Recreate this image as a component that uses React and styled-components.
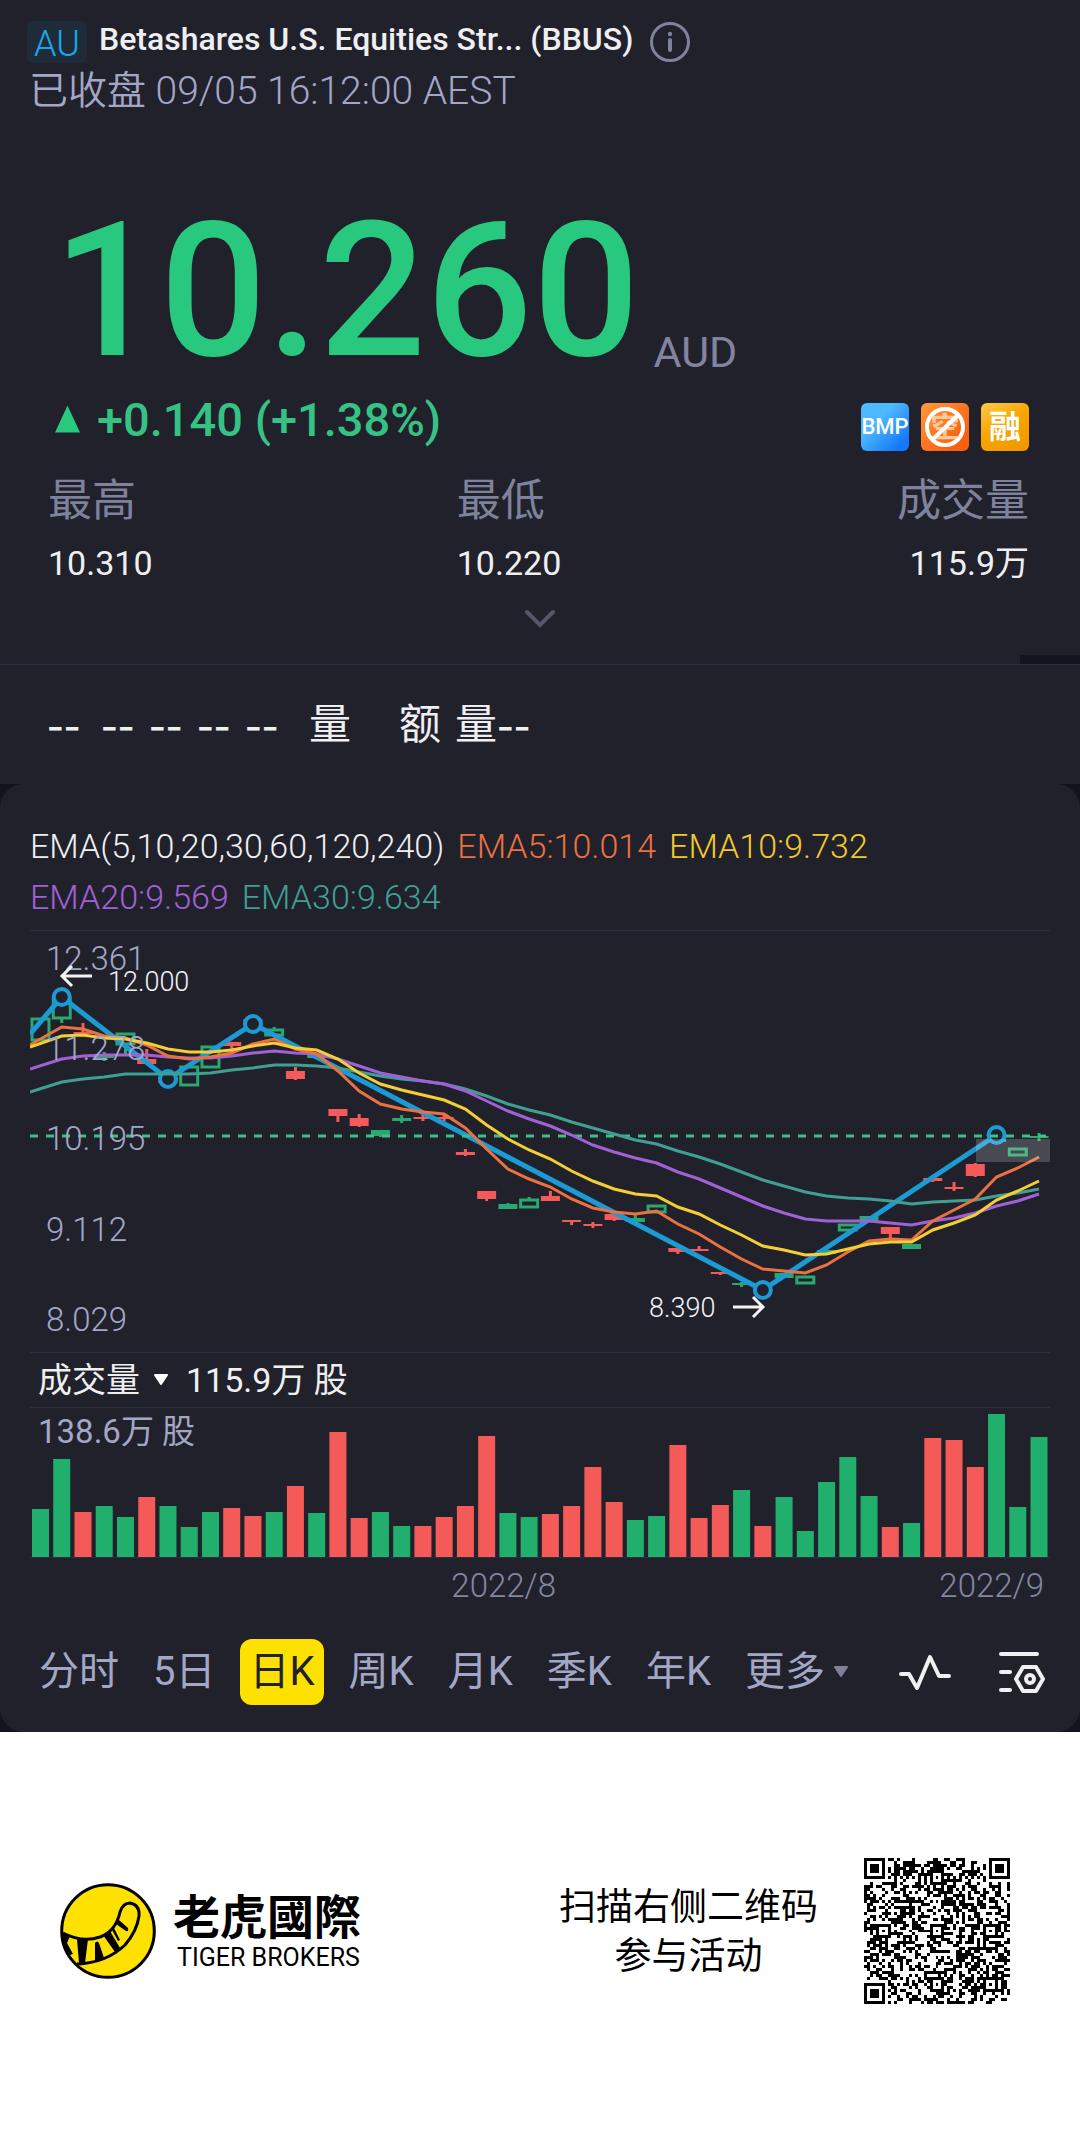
import { useState } from "react";
import styled, { createGlobalStyle, css } from "styled-components";

const GlobalStyle = createGlobalStyle`
  *,
  *::before,
  *::after {
    box-sizing: border-box;
  }

  body {
    margin: 0;
    background-color: #fff;
    font-family: Roboto, "Noto Sans CJK SC", sans-serif;
    color: #efeff2;
  }

  button {
    font: inherit;
    color: inherit;
    background: none;
    border: none;
    padding: 0;
    cursor: pointer;
  }
`;

const GREEN = "#21af6e";
const RED = "#f45a57";

/* ---------- Quote header ---------- */

const Screen = styled.main`
  background-color: #21212b;
`;

const Header = styled.header`
  padding: 21px 27px 0;
`;

const TitleRow = styled.div`
  display: flex;
  align-items: flex-start;
`;

const Market = styled.span`
  width: 60px;
  height: 42px;
  border-radius: 6px;
  background-color: #1e2c39;
  color: #1ba8ea;
  font-size: 36px;
  font-weight: 350;
  line-height: 46px;
  text-align: center;
`;

const Title = styled.h1`
  margin: 0 16px 0 12px;
  font-size: 32px;
  font-weight: 500;
  line-height: 36px;
`;

const InfoButton = styled.button`
  display: flex;
`;

const Status = styled.p`
  margin: 3px 0 0 2px;
  font-size: 39px;
  font-weight: 350;
  line-height: 50px;
  color: #a3a7c6;
`;

const Quote = styled.section`
  padding: 92px 51px 0 48px;
`;

const PriceRow = styled.div`
  display: flex;
  align-items: flex-end;
  gap: 14px;
  padding-left: 5px;
`;

const Price = styled.strong`
  font-size: 188px;
  font-weight: 500;
  line-height: 166px;
  color: #28c87e;
`;

const Currency = styled.span`
  font-size: 43px;
  line-height: 44px;
  color: #8185a0;
`;

const ChangeRow = styled.div`
  display: flex;
  justify-content: space-between;
  margin-top: 29px;
  padding-left: 7px;
`;

const Change = styled.span`
  display: flex;
  align-items: center;
  gap: 17px;
  height: 32px;
  font-size: 47px;
  font-weight: 500;
  color: #35c284;
`;

const Badges = styled.div`
  display: flex;
  gap: 12px;
`;

const Badge = styled.span`
  display: grid;
  place-items: center;
  width: 48px;
  height: 48px;
  border-radius: 6px;
  overflow: hidden;
  font-size: ${(props) => props.$size || "32px"};
  font-weight: ${(props) => props.$weight || 700};
  line-height: 48px;
  color: #fff;
  background: ${(props) => props.$fill};
`;

const Stats = styled.dl`
  display: grid;
  grid-template-columns: 5fr 4fr 3fr;
  margin: 22px 0 0;
`;

const Stat = styled.div`
  text-align: ${(props) => (props.$end ? "right" : "left")};

  dt {
    font-size: 44px;
    line-height: 56px;
    color: #7e829c;
  }

  dd {
    margin: 14px 0 0;
    font-size: 34px;
    line-height: 40px;
  }
`;

const ExpandButton = styled.button`
  display: flex;
  align-items: flex-start;
  margin: 26px auto 0;
  height: 46px;
`;

const Shade = styled.div`
  width: 60px;
  height: 9px;
  margin-left: auto;
  background-color: #14141e;
`;

const DepthRow = styled.div`
  display: flex;
  align-items: center;
  height: 120px;
  padding: 0 47px 8px;
  border-top: 1px solid #2d2f3b;
  font-family: "Noto Sans CJK SC", sans-serif;
  font-size: 42px;
  line-height: 60px;
`;

const Dashes = styled.span`
  width: ${(props) => (props.$wide ? "54px" : "48px")};
  font-size: 48px;
`;

const DepthLabel = styled.span`
  display: flex;
  margin-left: ${(props) => props.$gap};
`;

/* ---------- Chart panel ---------- */

const PanelWrap = styled.div`
  background-color: #14141e;
`;

const Panel = styled.section`
  padding: 37px 30px 27px;
  border-radius: 24px;
  background-color: #21212b;
`;

const Legend = styled.div`
  display: flex;
  flex-wrap: wrap;
  column-gap: 13px;
  margin-bottom: 7px;
  font-size: 34px;
  font-weight: 350;
  line-height: 51px;
`;

const LegendItem = styled.span`
  color: ${(props) => props.$color};
`;

const Plot = styled.svg`
  display: block;
  width: 100%;
  height: auto;
  border-top: 1px solid #2d2f3b;
`;

const VolumeHead = styled.div`
  display: flex;
  align-items: center;
  height: 55px;
  padding-left: 8px;
  border-top: 1px solid #2d2f3b;
  font-size: 34px;
  line-height: 54px;
`;

const VolumeButton = styled.button`
  display: flex;
  align-items: center;
  gap: 13px;
  margin-right: 17px;
`;

const Dates = styled.div`
  display: grid;
  grid-template-columns: 526px 1fr;
  padding: 3px 6px 0 0;
  border-top: 1px solid #2d2f3b;
  text-align: right;
  font-size: 33px;
  font-weight: 350;
  line-height: 50px;
  color: #8286a1;
`;

const Toolbar = styled.div`
  display: flex;
  align-items: center;
  justify-content: space-between;
  margin-top: 28px;
  padding-right: 4px;
`;

const Tabs = styled.nav`
  display: flex;
  gap: 16px;
`;

const Tab = styled.button`
  display: flex;
  align-items: center;
  gap: 8px;
  height: 66px;
  padding: 0 9px;
  border-radius: 12px;
  font-size: 40px;
  line-height: 68px;
  white-space: nowrap;
  color: #a3a7c6;

  ${(props) =>
    props.$active &&
    css`
      background-color: #ffe100;
      color: #21212b;
    `}
`;

const Tools = styled.div`
  display: flex;
  align-items: center;
  gap: 47px;
  padding-top: 2px;

  button {
    display: flex;
  }
`;

/* ---------- Share footer ---------- */

const Footer = styled.footer`
  display: flex;
  align-items: center;
  justify-content: space-between;
  height: 397px;
  padding: 0 70px 0 60px;
  color: #000;
`;

const Brand = styled.div`
  display: flex;
  align-items: center;
  gap: 17px;
`;

const BrandName = styled.div`
  display: flex;
  flex-direction: column;
  font-family: "Noto Sans CJK TC", sans-serif;
  font-size: 47px;
  font-weight: 700;
  line-height: 54px;

  small {
    padding-left: 4px;
    font-family: Roboto, sans-serif;
    font-size: 25px;
    font-weight: 400;
    line-height: 34px;
  }
`;

const Invite = styled.div`
  display: flex;
  align-items: center;
  gap: 46px;

  p {
    margin: 0;
    padding-top: 3px;
    font-size: 37px;
    line-height: 49px;
    text-align: center;
  }
`;

/* ---------- Data ---------- */

const STEP = 21.245;
const cx = (i) => 10.5 + STEP * i;

// [tipo, topo do corpo, base do corpo, topo do pavio, base do pavio]
// h = verde vazado, g = verde cheio, r = vermelho
const CANDLES = [
  ["h", 87, 108, 87, 108],
  ["h", 67, 86, 67, 92],
  ["r", 101, 103, 92, 105],
  ["g", 124, 127, 121, 130],
  ["h", 102, 112, 102, 125],
  ["r", 128, 133, 118, 133],
  ["g", 146, 152, 146, 152],
  ["h", 135, 153, 135, 153],
  ["h", 115, 135, 115, 135],
  ["r", 111, 115, 111, 123],
  ["r", 88, 92, 88, 92],
  ["h", 98, 103, 96, 103],
  ["r", 140, 148, 136, 149],
  ["g", 124, 127, 124, 127],
  ["r", 178, 185, 178, 191],
  ["r", 187, 195, 183, 196],
  ["g", 199, 205, 199, 206],
  ["g", 187, 190, 184, 192],
  ["r", 186, 188, 184, 190],
  ["r", 186, 188, 184, 190],
  ["r", 221, 224, 218, 225],
  ["r", 260, 268, 260, 270],
  ["g", 273, 278, 272, 278],
  ["h", 268, 275, 266, 275],
  ["r", 265, 270, 260, 270],
  ["r", 289, 291, 289, 294],
  ["r", 293, 295, 291, 297],
  ["r", 283, 289, 283, 290],
  ["g", 287, 291, 284, 291],
  ["h", 274, 280, 274, 280],
  ["r", 317, 321, 317, 323],
  ["r", 318, 320, 315, 320],
  ["r", 341, 343, 341, 344],
  ["g", 352, 354, 351, 356],
  null,
  ["g", 342, 347, 342, 347],
  ["h", 345, 351, 345, 351],
  ["g", 319, 323, 319, 323],
  ["h", 293, 298, 293, 298],
  ["g", 285, 290, 285, 290],
  ["r", 296, 303, 296, 308],
  ["g", 313, 318, 313, 318],
  ["r", 247, 250, 244, 251],
  ["r", 256, 258, 251, 260],
  ["r", 233, 245, 232, 246],
  ["g", 207, 211, 207, 211],
  ["h", 217, 223, 217, 223],
  ["g", 205, 207, 202, 210],
];

const EMAS = [
  {
    name: "EMA30",
    color: "#3f9f93",
    values: [
      157, 151, 148, 146, 143, 143, 143, 143, 142, 139, 137, 134, 134, 135, 137,
      141, 145, 148, 150, 153, 158, 165, 173, 179, 184, 191, 197, 203, 209, 213,
      220, 226, 233, 241, 249, 255, 261, 265, 267, 268, 270, 273, 271, 270, 269,
      265, 262, 258,
    ],
  },
  {
    name: "EMA20",
    color: "#a161d6",
    values: [
      134, 128, 125, 124, 124, 124, 126, 127, 127, 125, 122, 120, 122, 123, 128,
      135, 142, 146, 150, 153, 160, 170, 180, 188, 195, 204, 214, 221, 227, 232,
      241, 248, 257, 266, 275, 282, 288, 290, 290, 290, 292, 294, 290, 287, 282,
      275, 270, 263,
    ],
  },
  {
    name: "EMA5",
    color: "#ea7141",
    values: [
      110, 96, 98, 105, 107, 114, 125, 128, 126, 122, 113, 108, 118, 123, 140,
      160, 173, 178, 181, 183, 197, 218, 238, 248, 256, 268, 277, 281, 283, 280,
      293, 303, 316, 328, 338, 340, 342, 334, 321, 310, 308, 309, 290, 279, 268,
      246, 237, 226,
    ],
  },
  {
    name: "EMA10",
    color: "#f3cf33",
    values: [
      112, 105, 104, 107, 108, 112, 118, 121, 121, 119, 115, 112, 117, 119, 128,
      142, 153, 159, 164, 169, 178, 194, 208, 219, 228, 240, 250, 258, 263, 265,
      276, 283, 294, 304, 315, 319, 324, 323, 318, 313, 311, 311, 299, 292, 284,
      269, 260, 250,
    ],
  },
];

const SWINGS = [
  [0, 103],
  [cx(1), 66],
  [cx(6), 148],
  [cx(10), 93],
  [cx(34), 359],
  [cx(45), 204],
];

const AXIS = [
  ["12.361", 39],
  ["11.278", 129],
  ["10.195", 219],
  ["9.112", 310],
  ["8.029", 400],
];

const VOLUMES = [
  48, 98, -45, 51, 40, -60, 51, 30, 45, -49, -41, 45, -71, 44, -125, -39, 45,
  31, -31, -40, -51, -121, 44, 40, -43, -51, -90, -55, 37, 41, -112, -39, -52,
  67, -31, 60, 26, 75, 100, 61, -30, 34, -119, -117, -90, 143, 50, 120,
];

const PERIODS = ["分时", "5日", "日K", "周K", "月K", "季K", "年K"];

/* ---------- Charts ---------- */

function Candle({ index, data }) {
  const [type, top, bottom, high, low] = data;
  const color = type === "r" ? RED : "#2aa86f";
  const x = cx(index);

  return (
    <g stroke={color} strokeWidth="3">
      {high < top && <path d={`M${x} ${high}V${top}`} />}
      {low > bottom && <path d={`M${x} ${bottom}V${low}`} />}
      {type === "h" ? (
        <rect
          x={x - 8.5}
          y={top + 1}
          width="17"
          height={bottom - top}
          fill="none"
        />
      ) : (
        <rect
          x={x - 9.5}
          y={top}
          width="19"
          height={bottom - top}
          fill={color}
          stroke="none"
        />
      )}
    </g>
  );
}

function PriceChart() {
  return (
    <Plot viewBox="0 0 1020 421" role="img" aria-label="日K">
      {CANDLES.map(
        (data, i) => data && <Candle key={i} index={i} data={data} />
      )}

      <g fill="none" stroke="#1b9ad4" strokeWidth="5">
        <polyline points={SWINGS.map((p) => p.join(",")).join(" ")} />
        {SWINGS.slice(1).map(([x, y]) => (
          <circle key={x} cx={x} cy={y} r="8" fill="#21212b" strokeWidth="4" />
        ))}
      </g>

      <path
        d="M0 205H1018"
        stroke="#3fbf89"
        strokeWidth="3"
        strokeDasharray="8 8"
      />

      {EMAS.map(({ name, color, values }) => (
        <polyline
          key={name}
          points={values
            .map((y, i) => `${i === 0 ? 0 : cx(i)},${i === 0 ? y + 4 : y}`)
            .join(" ")}
          fill="none"
          stroke={color}
          strokeWidth="3"
        />
      ))}

      <rect x="946" y="208" width="74" height="23" fill="#fff" opacity="0.18" />

      <g fill="#a3a7c6" fontSize="33" fontWeight="350">
        {AXIS.map(([label, y]) => (
          <text key={label} x="16" y={y}>
            {label}
          </text>
        ))}
      </g>

      <g fill="#f3f3f5" fontSize="27" fontWeight="350">
        <text x="78" y="60">
          12.000
        </text>
        <text x="619" y="386">
          8.390
        </text>
      </g>
      <g fill="none" stroke="#f3f3f5" strokeWidth="3">
        <path d="M62 45H33M42 35L32 45L42 55" />
        <path d="M703 376H732M723 366L733 376L723 386" />
      </g>
    </Plot>
  );
}

function VolumeChart() {
  return (
    <Plot viewBox="0 0 1020 149" role="img" aria-label="成交量">
      <text x="8" y="35" fill="#a3a7c6" fontSize="33">
        138.6万 股
      </text>
      {VOLUMES.map((v, i) => (
        <rect
          key={i}
          x={cx(i) - 8.5}
          y={149 - Math.abs(v)}
          width="17"
          height={Math.abs(v)}
          fill={v < 0 ? RED : GREEN}
        />
      ))}
    </Plot>
  );
}

/* ---------- Drawings ---------- */

function Caret({ color }) {
  return (
    <svg width="16" height="12" viewBox="0 0 16 12" aria-hidden="true">
      <path
        d="M2 1H14L8 10Z"
        fill={color}
        stroke={color}
        strokeWidth="2"
        strokeLinejoin="round"
      />
    </svg>
  );
}

function TigerLogo() {
  return (
    <svg width="96" height="96" viewBox="0 0 96 96" aria-hidden="true">
      <circle cx="48" cy="48" r="46.5" fill="#ffe100" />
      <path d="M1 49L10 53L7 60L13 71L10 72Q2 62 1 49Z" />
      <path d="M17 56L28 56L25 80L19 80Z" />
      <path d="M35 60Q37 57 39 60L44 75L35 78Z" />
      <path d="M43 52L50 48L60 65L55 69Z" />
      <path d="M52 47L54 45L60 57L58 58Z" />
      <path d="M56 41L59 37L68 45Q69 49 66 48Z" />
      <path
        d="M3 50Q22 60 40 54Q56 48 60 29Q63 20 70 20Q80 22 79 33Q77 48 65 62Q46 80 17 81"
        fill="none"
        stroke="#000"
        strokeWidth="3"
      />
      <circle
        cx="48"
        cy="48"
        r="46.3"
        fill="none"
        stroke="#000"
        strokeWidth="3"
      />
    </svg>
  );
}

const QR_SIZE = 49;

// Anel concêntrico usado nos marcadores de canto e de alinhamento
function ring(row, col, r, c, radius) {
  const d = Math.max(Math.abs(row - r), Math.abs(col - c));
  if (d > radius) return null;
  return radius === 4 ? d !== 4 && d !== 2 : d !== 1;
}

function buildQr() {
  const finders = [
    [3, 3],
    [3, 45],
    [45, 3],
  ];
  const aligns = [
    [6, 24],
    [24, 6],
    [24, 24],
    [24, 42],
    [42, 24],
    [42, 42],
  ];
  let seed = 20220905;
  let path = "";

  for (let row = 0; row < QR_SIZE; row++) {
    for (let col = 0; col < QR_SIZE; col++) {
      seed = (seed * 1103515245 + 12345) % 2147483648;
      let dark = (seed >> 12) % 100 < 50;
      if (row === 6) dark = col % 2 === 0;
      if (col === 6) dark = row % 2 === 0;
      for (const [r, c] of aligns) dark = ring(row, col, r, c, 2) ?? dark;
      for (const [r, c] of finders) dark = ring(row, col, r, c, 4) ?? dark;
      if (dark) path += `M${col} ${row}h1v1h-1z`;
    }
  }
  return path;
}

const qrPath = buildQr();

function QrCode() {
  return (
    <svg
      width="146"
      height="146"
      viewBox={`0 0 ${QR_SIZE} ${QR_SIZE}`}
      shapeRendering="crispEdges"
      role="img"
      aria-label="二维码"
    >
      <path d={qrPath} />
    </svg>
  );
}

/* ---------- Page ---------- */

function App() {
  const [period, setPeriod] = useState("日K");

  return (
    <>
      <GlobalStyle />

      <Screen>
        <Header>
          <TitleRow>
            <Market>AU</Market>
            <Title>Betashares U.S. Equities Str... (BBUS)</Title>
            <InfoButton aria-label="Info">
              <svg width="42" height="42" viewBox="0 0 42 42" fill="none">
                <circle
                  cx="21"
                  cy="21"
                  r="18.5"
                  stroke="#7e829c"
                  strokeWidth="3"
                />
                <path
                  d="M21 19V29"
                  stroke="#7e829c"
                  strokeWidth="4"
                  strokeLinecap="round"
                />
                <circle cx="21" cy="13" r="2.2" fill="#7e829c" />
              </svg>
            </InfoButton>
          </TitleRow>
          <Status>已收盘 09/05 16:12:00 AEST</Status>
        </Header>

        <Quote>
          <PriceRow>
            <Price>10.260</Price>
            <Currency>AUD</Currency>
          </PriceRow>

          <ChangeRow>
            <Change>
              <svg width="25" height="28" viewBox="0 0 26 28" aria-hidden="true">
                <path d="M13 0L26 28H0Z" fill="#28c87e" />
              </svg>
              +0.140 (+1.38%)
            </Change>
            <Badges>
              <Badge
                $size="22px"
                $weight={500}
                $fill="linear-gradient(135deg, #4fb9ff 35%, #1578fb 85%)"
              >
                BMP
              </Badge>
              <Badge $fill="linear-gradient(135deg, #ff9a3c, #fb5f10 80%)">
                <svg width="48" height="48" viewBox="0 0 48 48">
                  <text
                    x="24"
                    y="35"
                    fontSize="29"
                    textAnchor="middle"
                    fill="#ffc99a"
                  >
                    空
                  </text>
                  <circle
                    cx="24"
                    cy="24"
                    r="18"
                    fill="none"
                    stroke="#fff"
                    strokeWidth="4"
                  />
                  <path d="M11 37L37 12" stroke="#fff" strokeWidth="4" />
                </svg>
              </Badge>
              <Badge $fill="linear-gradient(150deg, #fccb4a, #f7a600 45%, #f29400)">
                融
              </Badge>
            </Badges>
          </ChangeRow>

          <Stats>
            <Stat>
              <dt>最高</dt>
              <dd>10.310</dd>
            </Stat>
            <Stat>
              <dt>最低</dt>
              <dd>10.220</dd>
            </Stat>
            <Stat $end>
              <dt>成交量</dt>
              <dd>115.9万</dd>
            </Stat>
          </Stats>
        </Quote>

        <ExpandButton aria-label="展开">
          <svg width="32" height="20" viewBox="0 0 32 20" fill="none">
            <path
              d="M3 3L16 16L29 3"
              stroke="#54576a"
              strokeWidth="4"
              strokeLinecap="round"
            />
          </svg>
        </ExpandButton>
        <Shade />

        <DepthRow>
          <Dashes $wide>--</Dashes>
          <Dashes>--</Dashes>
          <Dashes>--</Dashes>
          <Dashes>--</Dashes>
          <Dashes>--</Dashes>
          <DepthLabel $gap="16px">量</DepthLabel>
          <DepthLabel $gap="48px">额</DepthLabel>
          <DepthLabel $gap="14px">
            量<Dashes>--</Dashes>
          </DepthLabel>
        </DepthRow>

        <PanelWrap>
          <Panel>
            <Legend>
              <LegendItem $color="#efeff2">
                EMA(5,10,20,30,60,120,240)
              </LegendItem>
              <LegendItem $color="#ea7141">EMA5:10.014</LegendItem>
              <LegendItem $color="#f0ca2c">EMA10:9.732</LegendItem>
              <LegendItem $color="#a161d6">EMA20:9.569</LegendItem>
              <LegendItem $color="#3f9f93">EMA30:9.634</LegendItem>
            </Legend>

            <PriceChart />

            <VolumeHead>
              <VolumeButton>
                成交量
                <Caret color="#fff" />
              </VolumeButton>
              115.9万 股
            </VolumeHead>

            <VolumeChart />
            <Dates>
              <span>2022/8</span>
              <span>2022/9</span>
            </Dates>

            <Toolbar>
              <Tabs>
                {PERIODS.map((name) => (
                  <Tab
                    key={name}
                    $active={name === period}
                    onClick={() => setPeriod(name)}
                  >
                    {name}
                  </Tab>
                ))}
                <Tab>
                  更多
                  <Caret color="#7e829c" />
                </Tab>
              </Tabs>

              <Tools>
                <button aria-label="画线">
                  <svg width="52" height="38" viewBox="0 0 52 38" fill="none">
                    <path
                      d="M2 20H10L18 34L31 3L40 22H50"
                      stroke="#f0f0f2"
                      strokeWidth="4"
                      strokeLinecap="round"
                      strokeLinejoin="round"
                    />
                  </svg>
                </button>
                <button aria-label="设置">
                  <svg
                    width="48"
                    height="44"
                    viewBox="0 0 48 44"
                    fill="none"
                    stroke="#f0f0f2"
                    strokeWidth="4"
                    strokeLinecap="round"
                    strokeLinejoin="round"
                  >
                    <path d="M3 3H39M3 21H12M3 39H12" />
                    <path d="M25 16H38L45 28L38 40H25L18 28Z" />
                    <circle cx="32" cy="28" r="4" />
                  </svg>
                </button>
              </Tools>
            </Toolbar>
          </Panel>
        </PanelWrap>
      </Screen>

      <Footer>
        <Brand>
          <TigerLogo />
          <BrandName>
            老虎國際
            <small>TIGER BROKERS</small>
          </BrandName>
        </Brand>
        <Invite>
          <p>
            扫描右侧二维码
            <br />
            参与活动
          </p>
          <QrCode />
        </Invite>
      </Footer>
    </>
  );
}

export default App;
